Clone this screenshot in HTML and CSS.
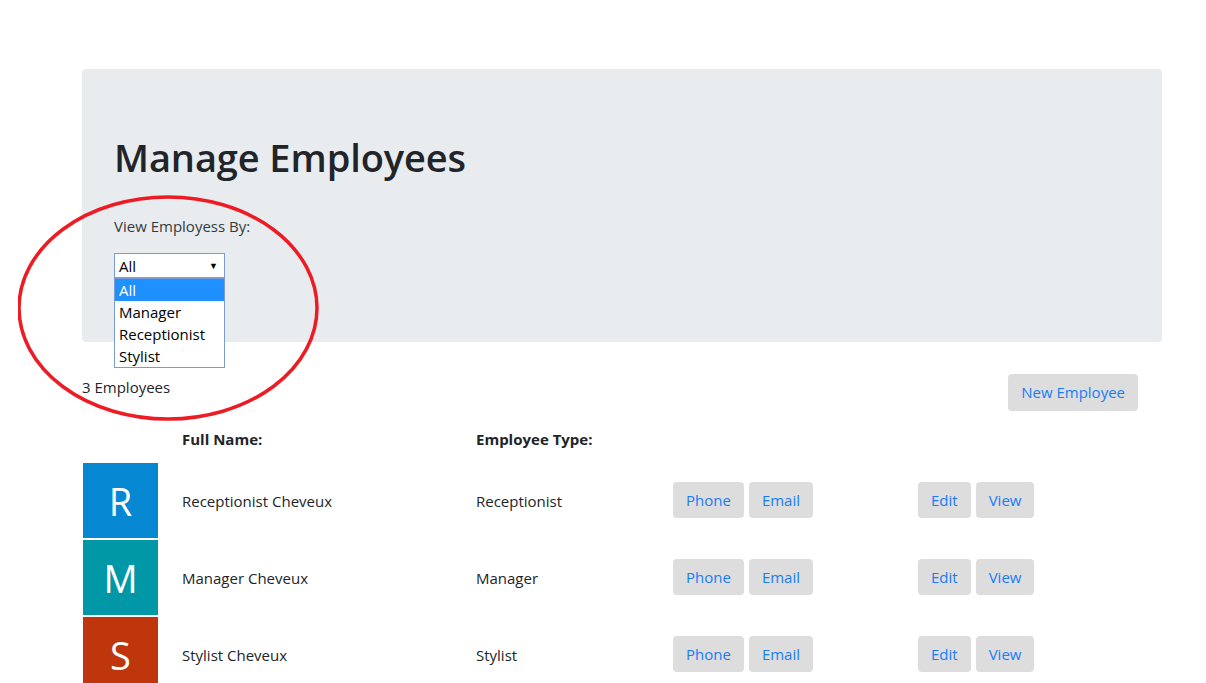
FILE: index.html
```html
<!DOCTYPE html>
<html>
<head>
<meta charset="utf-8">
<link rel="stylesheet" href="styles.css">
</head>
<body>
<div class="page">
  <div class="jumbotron">
    <h1 class="title">Manage Employees</h1>
    <div class="filter-label">View Employess By:</div>
    <div class="select-wrap">
      <div class="select"><span>All</span><span class="arrow">&#9660;</span></div>
      <ul class="dropdown">
        <li class="active">All</li>
        <li>Manager</li>
        <li>Receptionist</li>
        <li>Stylist</li>
      </ul>
    </div>
  </div>

  <div class="toolbar">
    <div class="count">3 Employees</div>
    <button class="btn btn-new">New Employee</button>
  </div>

  <div class="table">
    <div class="cell head"></div>
    <div class="cell head">Full Name:</div>
    <div class="cell head">Employee Type:</div>
    <div class="cell head"></div>
    <div class="cell head"></div>

    <div class="cell"><div class="avatar blue">R</div></div>
    <div class="cell">Receptionist Cheveux</div>
    <div class="cell">Receptionist</div>
    <div class="cell btns"><button class="btn">Phone</button><button class="btn">Email</button></div>
    <div class="cell btns"><button class="btn">Edit</button><button class="btn">View</button></div>

    <div class="cell"><div class="avatar teal">M</div></div>
    <div class="cell">Manager Cheveux</div>
    <div class="cell">Manager</div>
    <div class="cell btns"><button class="btn">Phone</button><button class="btn">Email</button></div>
    <div class="cell btns"><button class="btn">Edit</button><button class="btn">View</button></div>

    <div class="cell"><div class="avatar red">S</div></div>
    <div class="cell">Stylist Cheveux</div>
    <div class="cell">Stylist</div>
    <div class="cell btns"><button class="btn">Phone</button><button class="btn">Email</button></div>
    <div class="cell btns"><button class="btn">Edit</button><button class="btn">View</button></div>
  </div>
</div>

<svg class="annotation" width="320" height="240" viewBox="0 0 320 240">
  <ellipse cx="150" cy="114" rx="149" ry="111" fill="none" stroke="#ed1c24" stroke-width="3.5"/>
</svg>
</body>
</html>
```

FILE: styles.css
```css
* { box-sizing: border-box; }

html, body {
  margin: 0;
  padding: 0;
  background: #fff;
}

body {
  font-family: "Open Sans", "Noto Sans", sans-serif;
  font-size: 15px;
  line-height: 24px;
  color: #212529;
  position: relative;
  height: 683px;
  overflow: hidden;
}

.page {
  width: 1080px;
  margin-left: 82px;
  padding-top: 69px;
}

.jumbotron {
  background: #e9ecef;
  border-radius: 4px;
  padding: 64px 32px 64px;
}

.title {
  margin: 0;
  font-size: 38px;
  font-weight: 600;
  line-height: 48px;
  color: #212529;
  letter-spacing: -0.1px;
}

.filter-label {
  margin-top: 33px;
  font-size: 15px;
  color: #343a40;
}

.select-wrap {
  position: relative;
  margin-top: 15px;
  width: 111px;
}

.select {
  height: 25px;
  border: 1px solid #7a9cd3;
  background: #fff;
  display: flex;
  align-items: center;
  justify-content: space-between;
  padding: 0 6px 0 4px;
  font-size: 15px;
  color: #000;
}

.arrow {
  font-size: 9px;
  line-height: 1;
}

.dropdown {
  position: absolute;
  left: 0;
  top: 25px;
  width: 111px;
  margin: 0;
  padding: 0;
  list-style: none;
  background: #fff;
  border: 1px solid #7a9cd3;
  z-index: 5;
}

.dropdown li {
  height: 22px;
  line-height: 22px;
  padding-left: 4px;
  font-size: 15px;
  color: #000;
}

.dropdown li.active {
  background: #1e90ff;
  color: #fff;
}

.toolbar {
  display: flex;
  justify-content: space-between;
  align-items: flex-start;
  margin-top: 33px;
  padding-right: 24px;
}

.btn {
  font-family: inherit;
  font-size: 15px;
  line-height: 24px;
  color: #1a7cf7;
  background: #dddddd;
  border: none;
  border-radius: 4px;
  padding: 6px 13px;
  cursor: pointer;
}

.btn-new {
  padding: 6px 13px 7px;
  margin-top: -1px;
}

.table {
  display: grid;
  grid-template-columns: 100px 294px 197px 245px 1fr;
  row-gap: 2px;
  margin-top: 15px;
}

.cell {
  display: flex;
  align-items: center;
}

.cell.head {
  font-weight: 700;
  font-size: 15px;
  height: 35px;
  align-items: flex-start;
  padding-top: 1px;
}

.btns {
  gap: 5px;
  padding-bottom: 1px;
}

.avatar {
  width: 75px;
  height: 75px;
  margin-left: 1px;
  display: flex;
  align-items: center;
  justify-content: center;
  color: #fff;
  font-size: 38px;
  font-weight: 400;
}

.avatar.blue { background: #0587d2; }
.avatar.teal { background: #0098a6; }
.avatar.red { background: #c0360c; }

.annotation {
  position: absolute;
  left: 18px;
  top: 194px;
  pointer-events: none;
}
```
